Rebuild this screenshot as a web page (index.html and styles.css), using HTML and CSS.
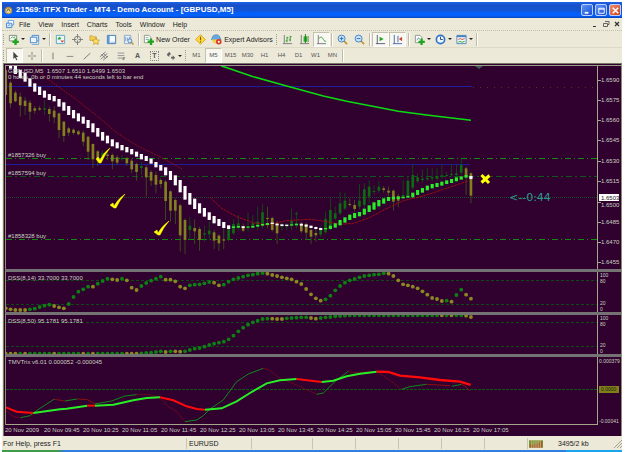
FILE: index.html
```html
<!DOCTYPE html>
<html lang="en">
<head>
<meta charset="utf-8">
<title>21569: ITFX Trader - MT4 - Demo Account - [GBPUSD,M5]</title>
<link rel="stylesheet" href="styles.css">
</head>
<body>
<div class="window">
  <header class="titlebar">
    <svg class="logo" viewBox="0 0 10 10"><circle cx="5" cy="5" r="4.2" fill="#b08a3c"/><path d="M2 4l3-2 3 2v3L5 8 2 7z" fill="#e9d79a"/><path d="M3 6l2-3 2 3" stroke="#604818" fill="none"/></svg>
    <h1>21569: ITFX Trader - MT4 - Demo Account - [GBPUSD,M5]</h1>
    <div class="winbtns">
      <button aria-label="Minimize"><svg viewBox="0 0 12 12"><path d="M3 8.5h4" stroke="#fff" stroke-width="2"/></svg></button>
      <button aria-label="Maximize"><svg viewBox="0 0 12 12"><path d="M3 3.500h6v5.500h-6z M3 4.500h6" stroke="#fff" fill="none"/></svg></button>
      <button class="close" aria-label="Close"><svg viewBox="0 0 12 12"><path d="M3 3l6 6M9 3l-6 6" stroke="#fff" stroke-width="1.700"/></svg></button>
    </div>
  </header>

  <nav class="menubar">
    <svg class="docicon" viewBox="0 0 10 10"><path d="M2.500 .5h6v5h-6z" fill="#fff" stroke="#5b9be0"/><path d="M.5 3.500h6v5h-6z" fill="#dcecff" stroke="#3d7fd0"/><path d="M2 7l1.500-2L5 6.500" stroke="#3d7fd0" fill="none" stroke-width=".8"/></svg>
    <button>File</button><button>View</button><button>Insert</button><button>Charts</button><button>Tools</button><button>Window</button><button>Help</button>
    <div class="mdibtns">
      <button aria-label="Minimize chart"><svg viewBox="0 0 8 8"><path d="M2 6.500h3" stroke="#333"/></svg></button>
      <button aria-label="Restore chart"><svg viewBox="0 0 8 8"><path d="M3 1.500h4v3h-1M1.500 3.500h4v3h-4z" stroke="#444" fill="none" stroke-width=".8"/></svg></button>
      <button aria-label="Close chart"><svg viewBox="0 0 8 8"><path d="M2 2l4 4M6 2l-4 4" stroke="#333" stroke-width="1.200"/></svg></button>
    </div>
  </nav>

  <div class="toolbar main-tools">
    <i class="grip"></i>
    <button class="drop" aria-label="New chart"><svg viewBox="0 0 12 12"><path d="M1.500 1.500h8v6h-8z" fill="#fff" stroke="#7a8a7a"/><path d="M3 5l2-2 1 1 2-1" stroke="#3a8a3a" fill="none"/><path d="M7 5h2.500v2.300h2.300v2.400H9.500V12H7V9.700H4.800V7.300H7z" fill="#1fa51f"/></svg><b></b></button>
    <button class="drop" aria-label="Profiles"><svg viewBox="0 0 12 12"><path d="M3.500 1.500h7v6h-7z" fill="#d5e8fb" stroke="#4c86c6"/><path d="M1.500 3.500h7v6h-7z" fill="#eaf4ff" stroke="#4c86c6"/><path d="M3 11.500h7.500V5" stroke="#78a8dc" fill="none"/></svg><b></b></button>
    <i class="sep"></i>
    <button aria-label="Market Watch"><svg viewBox="0 0 12 12"><path d="M1.500 1.500h9v9h-9z" fill="#e9f6fb" stroke="#58a4c4"/><path d="M3 5l2-2 2 2zM3 5h3v1H3z" fill="#2da02d"/><path d="M6 7h4L8 9.500z" fill="#d84a32"/></svg></button>
    <button aria-label="Data Window"><svg viewBox="0 0 12 12"><circle cx="6" cy="6" r="3.500" fill="none" stroke="#777"/><path d="M6 0v5M6 7v5M0 6h5M7 6h5" stroke="#777"/></svg></button>
    <button aria-label="Navigator"><svg viewBox="0 0 12 12"><path d="M1 2h3l1 1h3v4H1z" fill="#f4cf52" stroke="#b98d1e" stroke-width=".6"/><path d="M7.500 4l1.300 2.500 2.700.3-2 1.900.6 2.800-2.600-1.400L5 11.500l.5-2.800-2-1.900 2.700-.3z" fill="#ffe060" stroke="#b98d1e" stroke-width=".7"/></svg></button>
    <button aria-label="Terminal"><svg viewBox="0 0 12 12"><path d="M1.500 1.500h9v9h-9z" fill="#f6fbff" stroke="#3973b8"/><path d="M2 2h2v8H2z" fill="#5c9be0"/><path d="M5 9h5" stroke="#9bc"/></svg></button>
    <button aria-label="Strategy Tester"><svg viewBox="0 0 12 12"><path d="M1.500 1.500h7v9h-7z" fill="#edf3fb" stroke="#8aa6c8"/><path d="M3 3v5M5 4v3M7 3v4" stroke="#5888c0" stroke-width=".8"/><circle cx="7.500" cy="7.500" r="2.200" fill="#d3e8fb" stroke="#4d7fb8"/><path d="M9 9l2.500 2.500" stroke="#b8902e" stroke-width="1.500"/></svg></button>
    <i class="sep"></i>
    <button class="wide order"><svg viewBox="0 0 12 12"><path d="M1.500 1.500h5l2 2v6h-7z" fill="#fff" stroke="#8a978a"/><path d="M3 4h3M3 6h4" stroke="#8aa"/><path d="M7.500 5H10v2h2v2.500h-2V12H7.500V9.500H5V7h2.500z" fill="#1fa51f"/></svg>New Order</button>
    <button aria-label="MetaEditor"><svg viewBox="0 0 12 12"><path d="M6 .7L11.300 6 6 11.300.7 6z" fill="#ffd93c" stroke="#c8981c" stroke-width=".8"/><path d="M6 3v3.700M6 8v1.200" stroke="#7c5a10" stroke-width="1.200"/></svg></button>
    <button class="wide expert"><svg viewBox="0 0 12 12"><path d="M1 5c0-5 8-6 9-1l1 2H0z" fill="#64a8e4" stroke="#35699c" stroke-width=".5"/><path d="M1 6h8v3c-2 3-7 2-8-3" fill="#f2ce50"/><circle cx="8.500" cy="8.500" r="3" fill="#d63a26"/><path d="M7.500 7.500h2v2h-2z" fill="#fff"/></svg>Expert Advisors</button>
    <i class="grip"></i>
    <button aria-label="Bar chart"><svg viewBox="0 0 12 12"><path d="M2.500 1v9.500M1 10.500h10" stroke="#777"/><path d="M5.500 3v6M4 7.500h1.500M5.500 4H7M9 2v6M7.500 6.500H9M9 3h1.500" stroke="#2a9a2a"/></svg></button>
    <button aria-label="Candlesticks"><svg viewBox="0 0 12 12"><path d="M2.500 1v9.500M1 10.500h10M10 2v7" stroke="#777"/><path d="M5 2.500h4v6H5z" fill="#28b428"/><path d="M7 0v10" stroke="#18801a"/></svg></button>
    <button class="on" aria-label="Line chart"><svg viewBox="0 0 12 12"><path d="M2.500 1v9.500M1 10.500h10" stroke="#777"/><path d="M3 5c3-3 4-1 5 1s2 2 3 2" stroke="#2a9a2a" fill="none"/></svg></button>
    <i class="sep"></i>
    <button aria-label="Zoom in"><svg viewBox="0 0 12 12"><path d="M7.500 7.500l3.500 3.500" stroke="#c49a34" stroke-width="2"/><circle cx="5" cy="5" r="3.800" fill="#c9e3fa" stroke="#3c7fc6"/><path d="M3 5h4M5 3v4" stroke="#2b6cb4"/></svg></button>
    <button aria-label="Zoom out"><svg viewBox="0 0 12 12"><path d="M7.500 7.500l3.500 3.500" stroke="#c49a34" stroke-width="2"/><circle cx="5" cy="5" r="3.800" fill="#c9e3fa" stroke="#3c7fc6"/><path d="M3 5h4" stroke="#2b6cb4"/></svg></button>
    <i class="sep"></i>
    <button class="on" aria-label="Auto scroll"><svg viewBox="0 0 12 12"><path d="M2.500 1v9.500M1 10.500h10" stroke="#557"/><path d="M5 3l4.500 2.500L5 8z" fill="#27a827"/></svg></button>
    <button class="on" aria-label="Chart shift"><svg viewBox="0 0 12 12"><path d="M2.500 1v9.500M1 10.500h10M6.500 2v7" stroke="#46a"/><path d="M11 3v5L7.500 5.500z" fill="#c8452c"/></svg></button>
    <i class="sep wide-sep"></i>
    <button class="drop" aria-label="Indicators"><svg viewBox="0 0 12 12"><path d="M1.500 1.500h5l2 2v6h-7z" fill="#fff" stroke="#8a978a"/><path d="M3 7l2-3 1 2" stroke="#699" fill="none"/><path d="M7 5h2.500v2.300h2.300v2.400H9.500V12H7V9.700H4.800V7.300H7z" fill="#1fa51f"/></svg><b></b></button>
    <button class="drop" aria-label="Periodicity"><svg viewBox="0 0 12 12"><circle cx="6" cy="6" r="4.500" fill="#eef6ff" stroke="#2f74c8" stroke-width="1.800"/><path d="M6 3v3h2.500" stroke="#345" fill="none"/></svg><b></b></button>
    <button class="drop" aria-label="Templates"><svg viewBox="0 0 12 12"><path d="M1 1.500h10v9H1z" fill="#f4faff" stroke="#4a84c0"/><path d="M1 2.500h10" stroke="#4a84c0" stroke-width="2"/><path d="M2.500 6l2-1 2 1 3-1" stroke="#c84a32" fill="none"/><path d="M2.500 9l2-1 2 1 3-1" stroke="#2a9a2a" fill="none"/></svg><b></b></button>
    <i class="sep"></i>
  </div>

  <div class="toolbar draw-tools">
    <i class="grip"></i>
    <button class="on" aria-label="Cursor"><svg viewBox="0 0 12 12"><path d="M4 1v8.500l2-1.800L7.500 11l1.200-.6L7.300 7.200H10z" fill="#444"/></svg></button>
    <button aria-label="Crosshair"><svg viewBox="0 0 12 12"><path d="M6 1v4M6 7v4M1 6h4M7 6h4" stroke="#777"/></svg></button>
    <i class="sep"></i>
    <button aria-label="Vertical line"><svg viewBox="0 0 12 12"><path d="M6 2v8" stroke="#666"/></svg></button>
    <button aria-label="Horizontal line"><svg viewBox="0 0 12 12"><path d="M2 6.500h8" stroke="#777"/></svg></button>
    <button aria-label="Trendline"><svg viewBox="0 0 12 12"><path d="M2 10l8-7.500" stroke="#666"/></svg></button>
    <button aria-label="Channel"><svg viewBox="0 0 12 12"><path d="M1 7l7-6M2 10l8-7M5 11l6-5M3 4l5 5M5 2.500l5 5" stroke="#666" stroke-width=".9"/></svg></button>
    <button aria-label="Fibonacci"><svg viewBox="0 0 12 12"><path d="M2 2.500h8M2 5.500h8M2 8.500h6" stroke="#888"/><path d="M8.500 11V8H11M8.500 9.500h2" stroke="#555" fill="none" stroke-width=".8"/></svg></button>
    <button class="letter" aria-label="Text">A</button>
    <button class="letter" aria-label="Text label"><span class="boxed">T</span></button>
    <button class="drop" aria-label="Arrows"><svg viewBox="0 0 12 12"><path d="M1 4l3-3 2 3-2 1v2L2 6zM6 7h2V5l3 3-3 3V9H6z" fill="#666"/></svg><b></b></button>
    <i class="grip"></i>
    <button>M1</button><button class="on">M5</button><button>M15</button><button>M30</button><button>H1</button><button>H4</button><button>D1</button><button>W1</button><button>MN</button>
    <i class="sep"></i>
  </div>

  <main class="chart">
    <section class="panel price">
      <svg class="plot">
        <g fill="none">
          <path d="M0 92.500h693" stroke="#118a11" stroke-dasharray="6 3 1 3"/>
          <path d="M0 110.500h693" stroke="#0b5a18" stroke-dasharray="6 3 2 3"/>
          <path d="M0 131.500h693" stroke="#204b30" stroke-dasharray="1 1"/>
          <path d="M0 173.500h693" stroke="#118a11" stroke-dasharray="6 3 1 3"/>
          <path d="M0 20.500h466M0 98.500h464" stroke="#1c1c9c"/>
          <path d="M467 21.500h126" stroke="#5a3320" stroke-dasharray="1 6"/>
        </g>
        <g id="price"></g>
        <path d="M469 0h8l-4 3z" fill="#3f6050"/>
        <g class="check">
          <path d="M90 93l2-2 2 3q4-8 10-12q-5 6-9 15h-2z"/>
          <path d="M104 139l3-2 1 3q4-7 11-12q-6 7-9 14h-2z"/>
          <path d="M148 166l3-2 1 3q4-7 11-12q-6 7-9 14h-2z"/>
        </g>
        <path d="M475.500 109l7.500 8M483.500 109.500l-8 7" stroke="#ff0" stroke-width="3"/>
        <text x="2" y="7">GBPUSD,M5&#160; 1.6507 1.6510 1.6499 1.6503</text>
        <text x="2" y="13">0 hours, 0b or 0 minutes 44 seconds left to bar end</text>
        <text x="2" y="91">#1857326 buy</text>
        <text x="2" y="109">#1857594 buy</text>
        <text x="2" y="172">#1858328 buy</text>
        <text class="count" x="503" y="135">&lt;--0:44</text>
      </svg>
      <svg class="axis">
        <path d="M0 14.500h3M0 34.500h3M0 54.500h3M0 74.500h3M0 95.500h3M0 115.500h3M0 136.500h3M0 156.500h3M0 176.500h3M0 196.500h3" stroke="#a5a58a"/>
        <text x="3" y="16">1.6590</text><text x="3" y="36">1.6575</text><text x="3" y="56">1.6560</text><text x="3" y="76">1.6545</text><text x="3" y="97">1.6530</text><text x="3" y="117">1.6515</text><text x="3" y="141">1.6500</text><text x="3" y="158">1.6485</text><text x="3" y="178">1.6470</text><text x="3" y="198">1.6455</text>
        <path d="M1 128h20v7H1z" fill="#fff"/><text class="dark" x="3" y="134">1.6503</text>
      </svg>
    </section>
    <section class="panel dss">
      <svg class="plot"><path d="M0 8.500h593M0 32.500h593" stroke="#0c4a16" stroke-dasharray="3 2"/><g id="dss14"></g><text x="2" y="8">DSS(8,14) 33.7000 33.7000</text></svg>
      <svg class="axis small"><text x="2" y="5">100</text><text x="2" y="11">80</text><text x="2" y="33">20</text><text x="2" y="39">0</text></svg>
    </section>
    <section class="panel dss">
      <svg class="plot"><path d="M0 7.500h593M0 31.500h593" stroke="#0c4a16" stroke-dasharray="3 2"/><g id="dss50"></g><text x="2" y="8">DSS(8,50) 95.1781 95.1781</text></svg>
      <svg class="axis small"><text x="2" y="5">100</text><text x="2" y="11">80</text><text x="2" y="32">20</text><text x="2" y="38">0</text></svg>
    </section>
    <section class="panel tmv">
      <svg class="plot"><path d="M0 32.500h593" stroke="#0c5a16" stroke-dasharray="3 1"/><g id="tmv"></g><text x="2" y="7">TMVTrix v6.01 0.000052 -0.000045</text></svg>
      <svg class="axis small"><text x="1" y="6">0.000379</text><path d="M1 29h20v7H1z" fill="#808018"/><text class="dark" x="3" y="34">0.0000</text><text x="1" y="66">-0.00041</text></svg>
    </section>
    <div class="times">
      <span>20 Nov 2009</span><span>20 Nov 09:45</span><span>20 Nov 10:25</span><span>20 Nov 11:05</span><span>20 Nov 11:45</span><span>20 Nov 12:25</span><span>20 Nov 13:05</span><span>20 Nov 13:45</span><span>20 Nov 14:25</span><span>20 Nov 15:05</span><span>20 Nov 15:45</span><span>20 Nov 16:25</span><span>20 Nov 17:05</span>
    </div>
  </main>

  <footer class="status">
    <span class="help">For Help, press F1</span><span class="profile">EURUSD</span><span class="cell c1"></span><span class="cell c2"></span><span class="cell c2"></span><span class="cell c2"></span><span class="cell c2"></span><span class="cell c2"></span>
    <span class="net"><svg viewBox="0 0 15 8"><path d="M0 0h15v8H0z" fill="#7c8e2e"/><path d="M1.500 8V5M3.500 8V5M5.500 8V4M7.500 8V4M9.500 8V3M11.500 8V2M13.500 8V1" stroke="#c43a2a"/><path d="M2.500 0v8M4.500 0v8M6.500 0v8M8.500 0v8M10.500 0v8M12.500 0v8" stroke="#e4e4c0" stroke-width=".5"/></svg>3495/2 kb</span>
    <svg class="resize" viewBox="0 0 8 8"><path d="M0 8l8-8M3 8l5-5M6 8l2-2" stroke="#a5a290"/></svg>
  </footer>
</div>
<div class="taskbar"><i></i></div>
<script src="chart.js"></script>
</body>
</html>
```
FILE: styles.css
```css
* { box-sizing: border-box; }
body {
  margin: 0;
  padding: 2px 3px 0 2px;
  background: #fff;
  color: #222;
  font: 7px/9px "Liberation Sans", Arial, sans-serif;
  overflow: hidden;
}
button {
  margin: 0;
  padding: 0;
  border: 0;
  background: none;
  color: inherit;
  font: inherit;
  display: flex;
  align-items: center;
  justify-content: center;
}
svg { display: block; flex: none; }
.window { background: #ece9d8; }

.titlebar {
  display: flex;
  align-items: center;
  height: 16px;
  padding: 0 1px 0 2px;
  gap: 3px;
  background: linear-gradient(#1c62e8, #1750c8 20%, #1553d0 50%, #0460fa 70%, #0460fa 88%, #0a3fb4);
  color: #fff;
}
.titlebar h1 { margin: 0; flex: 1; font-size: 8px; line-height: 10px; font-weight: bold; white-space: nowrap; }
.logo { width: 9px; height: 9px; }
.winbtns { display: flex; gap: 2px; }
.winbtns button {
  width: 12px;
  height: 12px;
  border: 1px solid #b8d0ff;
  border-radius: 2px;
  background: linear-gradient(135deg, #5c94f8, #1c50d0);
}
.winbtns .close { background: linear-gradient(135deg, #f09070, #d03c14); }
.winbtns svg { width: 11px; height: 11px; }

.menubar { display: flex; align-items: center; height: 13px; padding: 0 1px 0 4px; border-bottom: 1px dotted #c3bfac; }
.docicon { width: 9px; height: 9px; }
.menubar > button { padding: 0 4px; }
.mdibtns { display: flex; margin-left: auto; gap: 3px; }
.mdibtns svg { width: 8px; height: 8px; }

.toolbar { display: flex; align-items: center; }
.toolbar button { width: 17px; height: 15px; }
.toolbar svg { width: 11px; height: 11px; }
.main-tools { height: 17px; border-bottom: 1px solid #dedac6; }
.draw-tools { height: 15px; color: #555; font-size: 6px; }
.draw-tools svg { width: 10px; height: 10px; }
.draw-tools .letter { font-size: 7px; font-weight: bold; }
.toolbar .drop { width: 21px; gap: 2px; }
.drop b { border: 2px solid transparent; border-top-color: #222; border-bottom: 0; }
.toolbar .on { background: #f8f7f1; border: 1px solid #c5c1ad; border-right-color: #fff; border-bottom-color: #fff; }
.toolbar .wide { gap: 2px; white-space: nowrap; }
.toolbar .order { width: 51px; }
.toolbar .expert { width: 66px; }
.grip { width: 2px; height: 11px; margin: 0 1px; border-left: 1px dotted #9d9a87; }
.sep { width: 2px; height: 13px; margin: 0 1px; border-left: 1px solid #c0bca8; border-right: 1px solid #fff; }
.wide-sep { margin: 0 2px; }
.boxed { border: 1px dotted #888; width: 9px; line-height: 8px; }

.chart {
  margin-left: 1px;
  padding: 1px 0 0 1px;
  background: #30002f;
  border: 1px solid #77776a;
  border-bottom: 0;
  border-right-color: #8d8d70;
}
.panel { display: flex; border-top: 1px solid #9a9a88; border-left: 1px solid #8f8f70; }
.panel + .panel { border-top: 3px solid #747272; }
.plot { flex: 1; min-width: 0; height: 100%; border-right: 1px solid #a5a58a; }
.axis { width: 23px; height: 100%; }
.price { height: 204px; }
.dss { height: 43px; }
.dss + .dss { height: 42px; }
.tmv { height: 71px; }
.tmv .plot { border-bottom: 1px solid #a5a58a; }
.chart text { fill: #c9d2c0; font: 6px "Liberation Sans", Arial, sans-serif; }
.chart .small text { font-size: 5px; }
.chart text.dark { fill: #181818; }
.chart text.count { fill: #2c9a90; font: 11px "DejaVu Sans", sans-serif; }
.check { fill: #ff0; stroke: #ff0; stroke-width: .5; }
.times { display: flex; height: 11px; color: #c9d2c0; font-size: 6px; line-height: 11px; white-space: nowrap; overflow: hidden; }
.times span { width: 39px; flex: none; }

.status { display: flex; align-items: center; height: 13px; margin-top: 1px; padding-left: 1px; white-space: nowrap; }
.status > span { height: 11px; line-height: 11px; border-right: 1px solid #c8c4b0; }
.help { width: 184px; }
.profile { width: 65px; padding-left: 2px; }
.c1 { width: 61px; }
.c2 { width: 43px; }
.status .net { flex: 1; display: flex; align-items: center; gap: 15px; padding-left: 1px; border: 0; }
.net svg { width: 14px; height: 8px; }
.resize { width: 8px; height: 8px; }

.taskbar { display: flex; justify-content: flex-end; height: 3px; background: linear-gradient(90deg, #3f9c48 9%, #2f7ee0 10%); }
.taskbar i { width: 9%; background: #19a4ee; }
```
FILE: chart.js
```js
// All plot data is in thirds of a pixel; bars are 14.54 units apart.
const barX = i => 17.1 + 14.54 * i;
const G = '#0c6a10', O = '#82801f', LIME = '#28ee28';

function layer(id, dy, body) {
  document.getElementById(id).innerHTML =
    `<g transform="translate(-6,${dy}) scale(.3333)">${body}</g>`;
}
const box = (x, w, top, bottom, fill) =>
  `<rect x="${x - w / 2}" width="${w}" y="${top}" height="${Math.max(3, bottom - top)}" fill="${fill}"/>`;
const line = (points, stroke, width, dash = '') =>
  `<polyline points="${points}" fill="none" stroke="${stroke}" stroke-width="${width}" stroke-dasharray="${dash}"/>`;

// high, body top, body bottom, low, then g when the bar is bullish
const candles = `30,30,105,110 62,68,130,145 92,98,124,127 98,110,136,170 112,122,138,165 120,128,155,180 138,145,152,162 138,145,149,152 120,145,149,165,g 140,147,162,185 138,152,172,190 158,160,210,235 183,185,228,246 200,205,218,228 205,209,219,225 210,214,223,226 212,218,245,258 228,230,275,300 250,252,298,325 270,274,295,318 272,280,290,300,g 278,284,288,300 280,285,304,328 285,292,308,315 285,294,298,304,g 290,295,310,318 296,302,328,340 308,312,336,362 305,318,324,345,g 315,322,352,410 330,336,362,378 335,345,374,400 355,360,372,385 360,365,423,480 390,394,452,485 415,420,452,492 432,436,526,575 475,480,540,582 470,497,510,540,g 478,504,514,552 500,507,540,572 498,520,524,545,g 485,512,523,540,g 510,517,542,567 522,527,550,573 490,538,542,568 500,508,540,545,g 478,492,520,525,g 465,490,503,510,g 490,498,512,516 458,498,503,515,g 465,490,500,505,g 440,485,495,510,g 432,457,492,505,g 440,474,476,505 470,474,510,515 482,490,520,552 488,495,500,512,g 490,495,500,510,g 445,483,495,510,g 455,460,462,505,g 485,492,514,520 488,492,518,540 500,510,530,552 500,519,526,545 500,508,524,530,g 455,477,517,522,g 415,450,500,510,g 440,460,476,480,g 395,430,460,465,g 398,422,446,450,g 415,432,435,440 420,435,447,455 372,422,440,448,g 370,388,435,445,g 360,380,410,430,g 375,393,396,405,g 362,380,392,400,g 378,385,390,398 380,392,398,410 388,392,425,452 402,408,422,442 360,405,410,415,g 348,362,405,412,g 312,345,383,390,g 340,352,364,370,g 328,356,360,368,g 325,354,358,364,g 325,352,356,364,g 325,348,356,362,g 312,346,348,358,g 335,345,347,350,g 312,342,345,350,g 312,340,345,350,g 295,315,338,345,g 320,325,350,405 335,340,407,430`.split(' ').map(c => c.split(','));

// top, bottom of the moving-average blocks, starting at bar 1
const blocks = `17,26 17,42 30,54 38,65 55,80 70,95 80,105 92,113 102,120 108,124 117,140 127,152 138,165 150,175 160,184 170,191 180,204 190,217 204,230 216,242 227,250 238,259 247,265 255,271 261,277 267,283 275,290 282,298 288,303 296,311 306,322 315,332 322,346 333,360 346,376 360,397 378,419 399,434 416,447 430,460 444,470 457,480 468,490 477,498 486,504 496,507 499,504 498,503 499,504 500,503 498,503 495,500 492,497 489,495 488,492 491,496 493,498 494,498 493,497 491,496 491,497 494,500 497,504 501,507 504,510 504,508 497,507 490,503 480,496 472,488 464,480 459,474 456,469 446,464 436,456 427,449 420,439 415,431 411,423 410,418 410,417 410,415 407,413 398,412 390,405 384,398 377,391 372,385 369,381 365,377 361,372 357,369 352,364 349,359 345,353 348,357`.split(' ').map(b => b.split(',').map(Number));
const isGreenBlock = i => (i >= 47 && i <= 54 && i !== 49) || i === 59 || i === 60 || (i >= 66 && i < 96);

let price = '';
candles.forEach((c, i) => {
  const [h, t, b, l] = c.map(Number), color = c[4] ? G : O;
  price += box(barX(i), 2.4, h, l, c[4] ? '#0b5212' : '#3d5a18') + box(barX(i), 8, t, b, color);
});
price += line('100,17 140,55 220,112 300,175 340,210 380,238 420,262 470,285 520,312 548,328', '#9c0f14', 2.6, '6 3');
price += line('630,412 665,445 710,470 760,488 800,495 860,482 930,478 980,485 1020,493 1060,490 1085,482 1110,472 1155,448 1210,422 1270,408 1330,388 1405,363', '#9c0f14', 2.8, '9 2');
price += line('663,17 760,50 860,78 970,108 1040,124 1110,137 1195,154 1280,165 1413,181', '#0bdc12', 4.5);
blocks.forEach(([t, b], n) => {
  const i = n + 1;
  price += box(barX(i), 9.5, t, b, isGreenBlock(i) ? LIME : '#fff');
});
layer('price', -6, price);

function dots(values, olive) {
  return values.map((v, i) =>
    `<circle cx="${barX(i)}" cy="${v}" r="5.800" fill="${olive(i) ? '#8a8820' : '#0c8012'}"/>`).join('');
}
const dss14 = [130,133,135,135,135,133,131,126,122,119,123,127,130,117,96,80,73,65,65,56,48,41,43,45,41,46,68,75,63,54,47,41,35,44,44,49,65,70,61,59,58,55,51,53,61,59,50,43,39,35,31,29,26,24,26,30,33,37,40,43,50,57,72,88,100,107,103,92,76,63,53,46,42,37,33,31,29,28,25,26,33,46,58,61,65,70,79,89,99,102,108,107,110,90,74,89,101];
layer('dss14', -7, dots(dss14, i => i === 0 || dss14[i] > dss14[i - 1] && i !== 91 || i < 5 || i === 18 || i === 34));

const dss50 = [...Array(28).fill(266),265,264,263,261,259,261,259,259,260,259,255,251,249,245,240,236,233,230,223,212,199,188,179,172,167,162,161,161,162,162,160,159,158,157,157,159,161,159,157,156,154,153,152,...Array(24).fill(151),152,156];
const olive50 = new Set([0,1,2,4,10,16,18,25,26,27,33,35,36,55,56,57,63,64,90,92,95,96]);
layer('dss50', -50, dots(dss50, i => olive50.has(i)));

const R = '#ff0a0a', DR = '#8c0f14', DG = '#0f8a18';
layer('tmv', -92, [
  ['17,436 40,455 62,458', DR, 2.5, '5 2'],
  ['62,458 90,452 120,430 162,403', DG, 3],
  ['162,403 195,408', DR, 3],
  ['195,408 232,402', DG, 3],
  ['232,402 262,404 285,417', DR, 3],
  ['285,417 335,408 375,393 410,389', DG, 3],
  ['410,389 450,389 480,398 505,425 530,440 555,470', DR, 2.5, '5 2'],
  ['555,470 590,465 610,452 630,432 670,405 710,350 745,327 790,310', DG, 3],
  ['790,310 805,314 845,343 890,360 950,388', DR, 2.5, '5 2'],
  ['950,388 970,384 1010,345 1045,319', DG, 3],
  ['1045,319 1060,323 1130,320 1165,343 1205,373', DR, 2.5, '5 2'],
  ['1205,373 1230,365 1280,358', DG, 3],
  ['1280,358 1350,362', DR, 3],
  ['1355,364 1385,358', DG, 3],
  ['1385,358 1400,367 1410,378', DR, 3],
  ['17,427 50,440 100,444', R, 6],
  ['100,444 180,433 200,431 262,422', LIME, 6],
  ['262,422 285,422', R, 6],
  ['285,422 340,419 400,406 440,399 480,397', LIME, 6],
  ['480,397 520,406 560,424 590,432 615,434', R, 6],
  ['615,434 665,430 710,409 750,384 800,355 840,346 890,342', LIME, 6],
  ['890,342 965,351', R, 6],
  ['965,351 1000,347 1040,334 1080,326 1130,320', LIME, 6],
  ['1130,320 1165,321 1200,332 1260,337 1320,345 1380,350 1412,360', R, 7]
].map(s => line(...s)).join(''));
```
